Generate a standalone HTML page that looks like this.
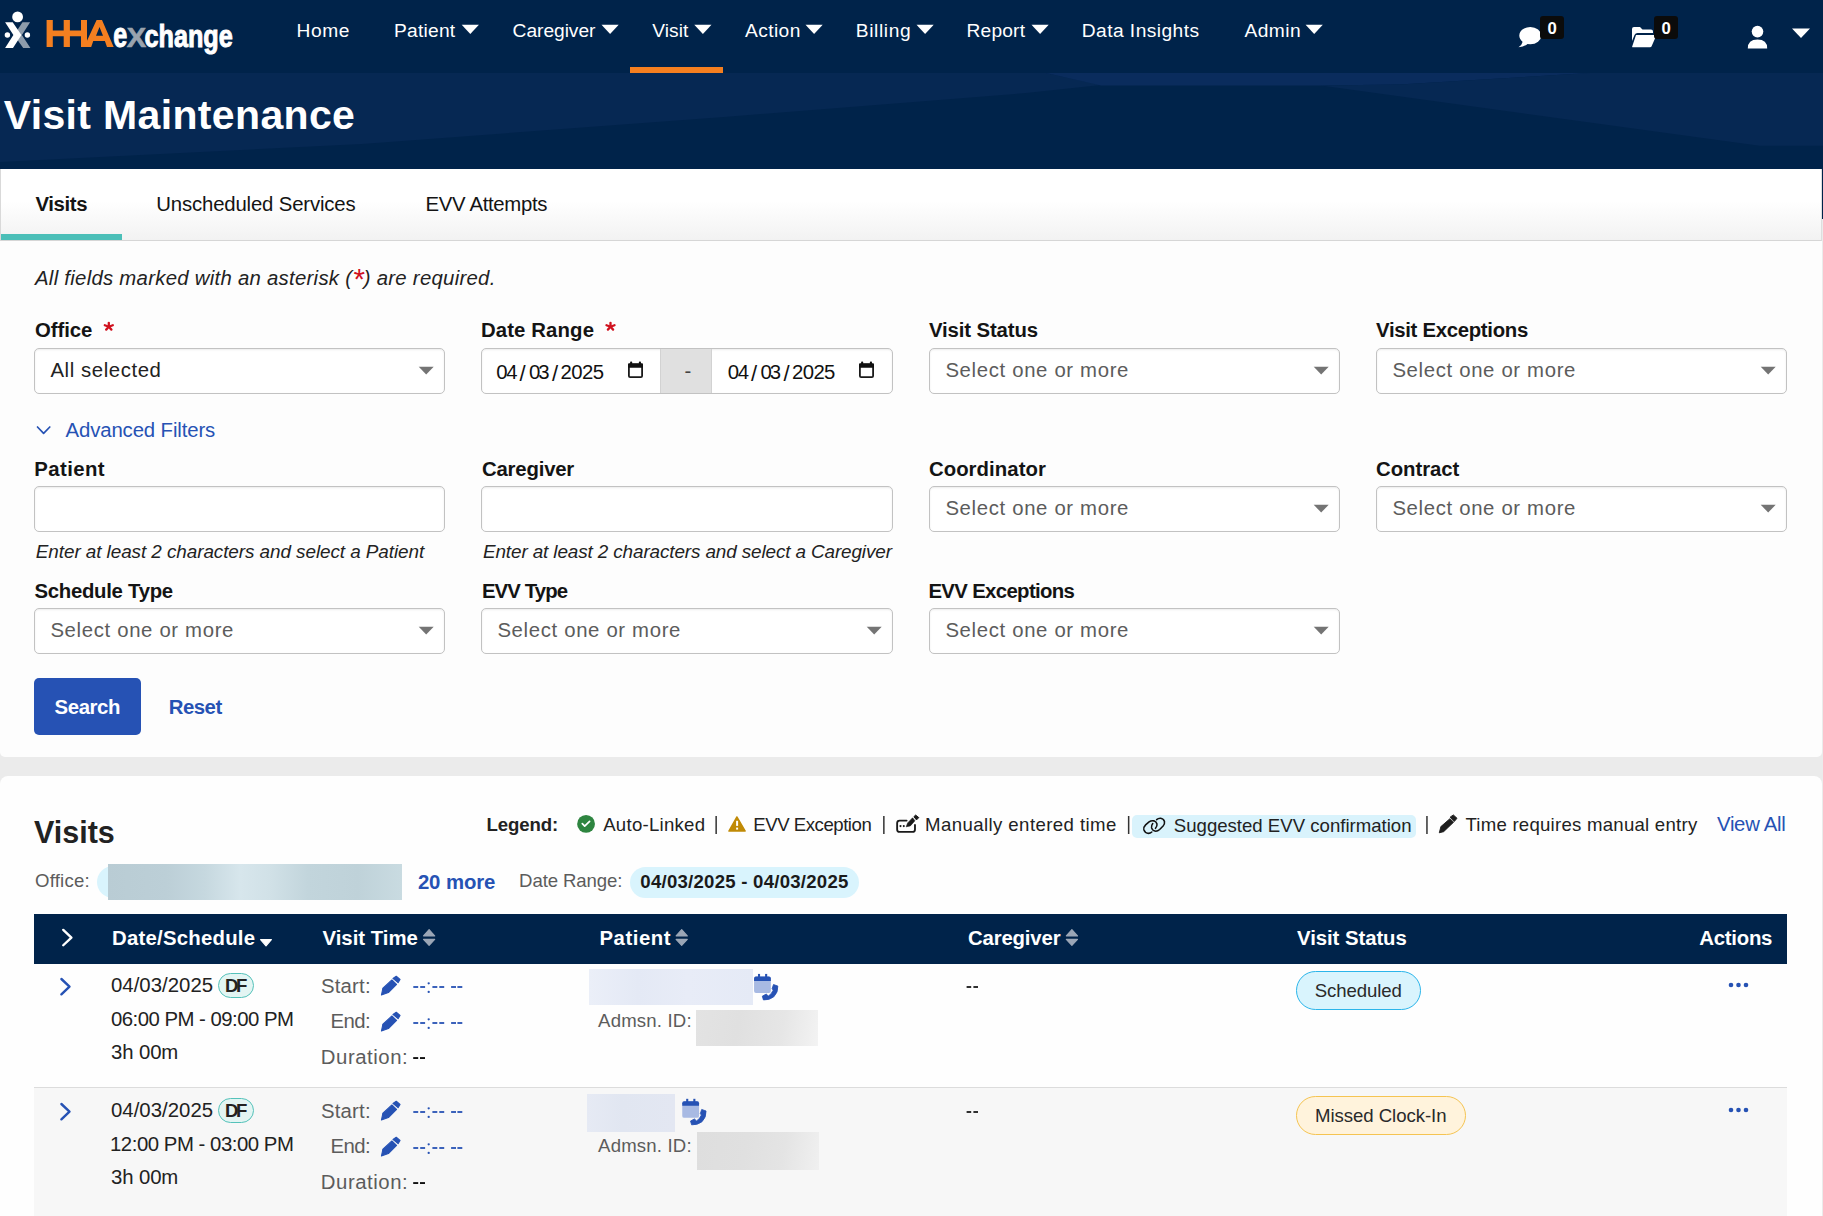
<!DOCTYPE html>
<html><head><meta charset="utf-8"><title>Visit Maintenance</title>
<style>
html,body{margin:0;padding:0;}
body{width:1823px;height:1216px;overflow:hidden;position:relative;background:#ebebeb;font-family:"Liberation Sans",sans-serif;}
.t{position:absolute;white-space:nowrap;line-height:normal;}
svg{position:absolute;overflow:visible;}
</style></head><body>
<div style="position:absolute;left:0px;top:0px;width:1823px;height:169px;background:#00234a"></div>
<div style="position:absolute;left:1822px;top:169px;width:1px;height:50px;background:#00234a"></div>
<div style="position:absolute;left:0px;top:219px;width:1823px;height:997px;background:#ebebeb"></div>
<div style="position:absolute;left:0px;top:230px;width:1822px;height:527px;background:#fdfdfd;border-radius:0 5px 5px 5px"></div>
<div style="position:absolute;left:0px;top:776px;width:1822px;height:440px;background:#fefefe;border-radius:8px 8px 0 0"></div>
<div style="position:absolute;left:0px;top:169px;width:1822px;height:72px;background:linear-gradient(#ffffff 0%,#ffffff 45%,#f2f2f2 100%);border-left:1px solid #d9d9d9;border-right:1px solid #dedede;box-sizing:border-box;border-bottom:1px solid #d6d6d6"></div>
<div style="position:absolute;left:1px;top:234px;width:121px;height:6px;background:#4bbfb8"></div>
<div style="position:absolute;left:34px;top:348px;width:411px;height:46px;background:#fff;border:1px solid #c2c2c2;border-radius:5px;box-sizing:border-box;box-shadow:inset 0 1px 2px rgba(0,0,0,.08)"></div>
<div style="position:absolute;left:929px;top:348px;width:411px;height:46px;background:#fff;border:1px solid #c2c2c2;border-radius:5px;box-sizing:border-box;box-shadow:inset 0 1px 2px rgba(0,0,0,.08)"></div>
<div style="position:absolute;left:1376px;top:348px;width:411px;height:46px;background:#fff;border:1px solid #c2c2c2;border-radius:5px;box-sizing:border-box;box-shadow:inset 0 1px 2px rgba(0,0,0,.08)"></div>
<div style="position:absolute;left:481px;top:348px;width:412px;height:46px;background:#fff;border:1px solid #c2c2c2;border-radius:5px;box-sizing:border-box;box-shadow:inset 0 1px 2px rgba(0,0,0,.08)"></div>
<div style="position:absolute;left:660px;top:349px;width:52px;height:44px;background:#e0e0e0;border-left:1px solid #d2d2d2;border-right:1px solid #d2d2d2;box-sizing:border-box"></div>
<div style="position:absolute;left:34px;top:486px;width:411px;height:46px;background:#fff;border:1px solid #c2c2c2;border-radius:5px;box-sizing:border-box;box-shadow:inset 0 1px 2px rgba(0,0,0,.08)"></div>
<div style="position:absolute;left:481px;top:486px;width:412px;height:46px;background:#fff;border:1px solid #c2c2c2;border-radius:5px;box-sizing:border-box;box-shadow:inset 0 1px 2px rgba(0,0,0,.08)"></div>
<div style="position:absolute;left:929px;top:486px;width:411px;height:46px;background:#fff;border:1px solid #c2c2c2;border-radius:5px;box-sizing:border-box;box-shadow:inset 0 1px 2px rgba(0,0,0,.08)"></div>
<div style="position:absolute;left:1376px;top:486px;width:411px;height:46px;background:#fff;border:1px solid #c2c2c2;border-radius:5px;box-sizing:border-box;box-shadow:inset 0 1px 2px rgba(0,0,0,.08)"></div>
<div style="position:absolute;left:34px;top:608px;width:411px;height:46px;background:#fff;border:1px solid #c2c2c2;border-radius:5px;box-sizing:border-box;box-shadow:inset 0 1px 2px rgba(0,0,0,.08)"></div>
<div style="position:absolute;left:481px;top:608px;width:412px;height:46px;background:#fff;border:1px solid #c2c2c2;border-radius:5px;box-sizing:border-box;box-shadow:inset 0 1px 2px rgba(0,0,0,.08)"></div>
<div style="position:absolute;left:929px;top:608px;width:411px;height:46px;background:#fff;border:1px solid #c2c2c2;border-radius:5px;box-sizing:border-box;box-shadow:inset 0 1px 2px rgba(0,0,0,.08)"></div>
<div style="position:absolute;left:34px;top:678px;width:107px;height:57px;background:#2652b4;border-radius:5px"></div>
<div style="position:absolute;left:1132px;top:814.5px;width:284px;height:23.200000000000045px;background:#d9f3fc;border-radius:5px"></div>
<div style="position:absolute;left:96.7px;top:866.2px;width:43.3px;height:31.5px;background:#d9f4fd;border-radius:16px 0 0 16px"></div>
<div style="position:absolute;left:108px;top:864px;width:294px;height:36px;background:linear-gradient(90deg,#b9ccd4 0%,#bccfd7 20%,#c6d8df 33%,#d7e6ec 45%,#d1e1e7 55%,#c2d5dc 68%,#bfd2d9 85%,#c9dbe1 100%)"></div>
<div style="position:absolute;left:630.3px;top:866.5px;width:228.70000000000005px;height:31.200000000000045px;background:#d9f4fd;border-radius:16px"></div>
<div style="position:absolute;left:34px;top:914px;width:1753px;height:50px;background:#00234a"></div>
<div style="position:absolute;left:34px;top:1087px;width:1753px;height:1px;background:#dcdcdc"></div>
<div style="position:absolute;left:34px;top:1088px;width:1753px;height:128px;background:#f7f7f7"></div>
<div style="position:absolute;left:218px;top:973.2px;width:35.80000000000001px;height:24.59999999999991px;background:#e3f5f3;border:1.3px solid #55c2ba;border-radius:13px;box-sizing:border-box"></div>
<div style="position:absolute;left:589px;top:969px;width:163.79999999999995px;height:35.60000000000002px;background:linear-gradient(90deg,#ebeff8,#e4e9f5 30%,#e8ecf7 60%,#e5eaf6)"></div>
<div style="position:absolute;left:695.9px;top:1010px;width:122.10000000000002px;height:35.700000000000045px;background:linear-gradient(100deg,#e3e3e3,#e0e0e0 35%,#e6e6e6 70%,#f3f3f3)"></div>
<div style="position:absolute;left:1296px;top:971px;width:125px;height:39px;background:#d9f4fd;border:1.5px solid #2bb5ea;border-radius:20px;box-sizing:border-box"></div>
<div style="position:absolute;left:218px;top:1098.2px;width:35.80000000000001px;height:24.59999999999991px;background:#e3f5f3;border:1.3px solid #55c2ba;border-radius:13px;box-sizing:border-box"></div>
<div style="position:absolute;left:587.1px;top:1094.2px;width:87.79999999999995px;height:37.700000000000045px;background:linear-gradient(90deg,#e6eaf4,#e1e6f1 40%,#e3e7f2)"></div>
<div style="position:absolute;left:697px;top:1132.2px;width:121.89999999999998px;height:37.700000000000045px;background:linear-gradient(100deg,#dedede,#e0e0e0 40%,#e4e4e4 70%,#f0f0f0)"></div>
<div style="position:absolute;left:1296px;top:1096px;width:170px;height:39px;background:#fff3dc;border:1.5px solid #f5c452;border-radius:20px;box-sizing:border-box"></div>
<svg style="left:0;top:0" width="1823" height="1216" viewBox="0 0 1823 1216">
<polygon fill="#062853" points="0,73 1046,73 1101,85 1026,93 724,117 362,144 0,162"/>
<polygon fill="#0a2c5d" points="1046,73 1590,73 1500,78.5 1400,84.4 1321,85.5 1101,85.5"/>
<polygon fill="#062853" points="1590,73 1823,73 1823,145.8 1759.6,145.8 1321,85.5 1400,84.4 1500,78.5"/>
<rect x="630" y="67" width="93" height="6" fill="#f47f20"/>
<circle cx="17.6" cy="16.9" r="5.4" fill="#fff"/>
<circle cx="7.4" cy="35" r="2.7" fill="#fff"/>
<circle cx="27.4" cy="35" r="2.7" fill="#fff"/>
<polygon fill="#8e9cab" points="30.1,22.3 22.5,22.3 14,35 23.2,48 30.4,48 21.9,35"/>
<polygon fill="#fff" points="5.1,22.3 12.7,22.3 21.4,35 13,48 5.1,48 13.4,35"/>
<path fill="#f47f20" fill-rule="evenodd" d="M46.6,20 H52.8 V30.6 H63.7 V20 H69.9 V30.6 H81 V20 H87 V40.8 L96.6,20 H102 L113.7,47.1 H107 L104.9,41 H93.25 L91.2,47.1 H81 V36.25 H69.9 V47.1 H63.7 V36.25 H52.8 V47.1 H46.6 Z M99.5,27.1 L103,35.8 H96 Z"/>
<g transform="translate(0,47.4) scale(1,1.22) translate(0,-47.4)" font-family="Liberation Sans" font-weight="700">
<text x="113.2" y="47.4" fill="#fff" stroke="#fff" stroke-width="0.8" font-size="28" textLength="14" lengthAdjust="spacingAndGlyphs">e</text>
<text x="126.8" y="47.4" fill="#9aa3ae" stroke="#9aa3ae" stroke-width="0.5" font-size="23" textLength="19.4" lengthAdjust="spacingAndGlyphs">X</text>
<text x="144.5" y="47.4" fill="#fff" stroke="#fff" stroke-width="0.8" font-size="26" textLength="88.3" lengthAdjust="spacingAndGlyphs">change</text></g>
<polygon points="461.7,24.8 478.9,24.8 470.3,34" fill="#fff"/>
<polygon points="601.5,24.8 618.7,24.8 610.1,34" fill="#fff"/>
<polygon points="694.3,24.8 711.5,24.8 702.9,34" fill="#fff"/>
<polygon points="805.5,24.8 822.7,24.8 814.1,34" fill="#fff"/>
<polygon points="916.5,24.8 933.7,24.8 925.1,34" fill="#fff"/>
<polygon points="1031.5,24.8 1048.7,24.8 1040.1,34" fill="#fff"/>
<polygon points="1305.6,24.8 1322.8,24.8 1314.1999999999998,34" fill="#fff"/>
<ellipse cx="1530.3" cy="35.6" rx="11" ry="8.6" fill="#fff"/>
<path d="M1523,41 Q1522,45 1518.5,47.2 Q1525,46.5 1528,43.5 Z" fill="#fff"/>
<rect x="1540" y="16" width="24" height="23" rx="3" fill="#0b0b0b"/>
<path d="M1632,29 Q1632,27 1634,27 L1640,27 L1642.5,29.5 L1651,29.5 Q1653,29.5 1653,31.5 L1653,33 L1637.5,33 Q1635.5,33 1634.5,35 L1632,41 Z" fill="#fff"/>
<path d="M1636,35 L1656.5,35 L1651.5,46.5 Q1651,47.2 1650,47.2 L1632.5,47.2 Q1631.8,47.2 1632.2,46.4 Z" fill="#fff"/>
<rect x="1654" y="16" width="24" height="23" rx="3" fill="#0b0b0b"/>
<circle cx="1757.5" cy="31.6" r="5.8" fill="#fff"/>
<path d="M1747.8,48.4 Q1747.8,39.5 1757.5,39.5 Q1767.2,39.5 1767.2,48.4 Z" fill="#fff"/>
<polygon points="1792,28.6 1810,28.6 1801,38.1" fill="#fff"/>
<g stroke="#d0121f" stroke-width="2.3" stroke-linecap="round"><line x1="108.8" y1="326.8" x2="108.8" y2="322.8"/><line x1="108.8" y1="326.8" x2="104.8" y2="325.2"/><line x1="108.8" y1="326.8" x2="112.8" y2="325.2"/><line x1="108.8" y1="326.8" x2="106.2" y2="329.6"/><line x1="108.8" y1="326.8" x2="111.39999999999999" y2="329.6"/></g>
<g stroke="#d0121f" stroke-width="2.3" stroke-linecap="round"><line x1="610.5" y1="326.8" x2="610.5" y2="322.8"/><line x1="610.5" y1="326.8" x2="606.5" y2="325.2"/><line x1="610.5" y1="326.8" x2="614.5" y2="325.2"/><line x1="610.5" y1="326.8" x2="607.9" y2="329.6"/><line x1="610.5" y1="326.8" x2="613.1" y2="329.6"/></g>
<polygon points="418.7,366.7 433.7,366.7 426.2,374.6" fill="#747474"/>
<polygon points="1313.7,366.7 1328.7,366.7 1321.2,374.6" fill="#747474"/>
<polygon points="1760.7,366.7 1775.7,366.7 1768.2,374.6" fill="#747474"/>
<rect x="628.9" y="364.7" width="13.2" height="12.5" rx="1.2" fill="none" stroke="#1a1a1a" stroke-width="1.8"/>
<rect x="628" y="363.3" width="15" height="4.4" rx="1" fill="#111"/>
<rect x="630.1" y="361.6" width="2.1" height="3" rx="0.8" fill="#111"/><rect x="638.9" y="361.6" width="2.1" height="3" rx="0.8" fill="#111"/>
<rect x="859.9" y="364.7" width="13.2" height="12.5" rx="1.2" fill="none" stroke="#1a1a1a" stroke-width="1.8"/>
<rect x="859" y="363.3" width="15" height="4.4" rx="1" fill="#111"/>
<rect x="861.1" y="361.6" width="2.1" height="3" rx="0.8" fill="#111"/><rect x="869.9" y="361.6" width="2.1" height="3" rx="0.8" fill="#111"/>
<polyline points="37.5,427 43.6,433.4 49.8,427" fill="none" stroke="#2652b4" stroke-width="1.7" stroke-linecap="round" stroke-linejoin="round"/>
<polygon points="1313.7,504.7 1328.7,504.7 1321.2,512.6" fill="#747474"/>
<polygon points="1760.7,504.7 1775.7,504.7 1768.2,512.6" fill="#747474"/>
<polygon points="418.7,626.7 433.7,626.7 426.2,634.6" fill="#747474"/>
<polygon points="866.7,626.7 881.7,626.7 874.2,634.6" fill="#747474"/>
<polygon points="1313.7,626.7 1328.7,626.7 1321.2,634.6" fill="#747474"/>
<circle cx="586.05" cy="823.9" r="8.9" fill="#2e8540"/>
<polyline points="582.3,823.7 584.7,826.1 589.6,821.4" fill="none" stroke="#fff" stroke-width="1.7" stroke-linecap="round" stroke-linejoin="round"/>
<polygon points="736.9,816.9 728.9,831.1 745.2,831.1" fill="#c08a06" stroke="#c08a06" stroke-width="1.4" stroke-linejoin="round"/>
<rect x="736.1" y="820.8" width="2" height="5.1" fill="#fff"/><rect x="736.1" y="827.6" width="2" height="2" fill="#fff"/>
<path d="M906.6,820.6 L899.6,820.6 Q897.14,820.6 897.14,823.1 L897.14,829.4 Q897.14,831.87 899.6,831.87 L912.5,831.87 Q914.98,831.87 914.98,829.4 L914.98,825" fill="none" stroke="#1a1a1a" stroke-width="1.85" stroke-linecap="round"/>
<circle cx="900.5" cy="826.1" r="1.05" fill="#1a1a1a"/><circle cx="903.8" cy="826.1" r="1.05" fill="#1a1a1a"/>
<polygon points="906.2,826.8 907.7,822.9 912.6,817.8 914.9,820.8 910.3,825.9" fill="#1a1a1a" stroke="#1a1a1a" stroke-width="0.6" stroke-linejoin="round"/>
<polygon points="913.9,816.7 915.6,815.1 918.8,817.6 916.5,819.9" fill="#1a1a1a" stroke="#1a1a1a" stroke-width="1" stroke-linejoin="round"/>
<g transform="translate(1138,812) scale(0.023026)" fill="none" stroke="#111" stroke-width="68" stroke-linecap="round">
<path d="M600,870 Q520,940 420,925 Q300,900 255,770 Q230,660 330,560 L480,430 Q580,360 690,385 Q800,420 825,520 Q840,620 760,710"/>
<path d="M640,500 Q570,590 590,690 Q630,820 770,835 Q860,830 940,760 L1090,610 Q1170,520 1150,410 Q1110,290 980,270 Q880,265 810,330"/></g>
<rect x="715.4" y="816" width="1.5" height="18" fill="#333"/>
<rect x="883.0999999999999" y="816" width="1.5" height="18" fill="#333"/>
<rect x="1127.8999999999999" y="816" width="1.5" height="18" fill="#333"/>
<rect x="1426.2" y="816" width="1.5" height="18" fill="#333"/>
<g transform="translate(1434,810) scale(0.023026)" fill="#1e1e1e" stroke="#1e1e1e" stroke-width="40" stroke-linejoin="round">
<polygon points="230,990 300,720 690,380 850,530 420,940"/>
<polygon points="700,310 840,215 1000,360 880,500"/></g>
<polyline points="63.25,929.9 71.4,937.6 63.25,945.25" fill="none" stroke="#fff" stroke-width="2.4" stroke-linecap="round" stroke-linejoin="round"/>
<polygon points="260.6,939.6 271.4,939.6 266,945.8" fill="#fff" stroke="#fff" stroke-width="1.2" stroke-linejoin="round"/>
<polygon points="429.1,929.6 423.5,935.9 434.7,935.9" fill="#9ba6b6" stroke="#9ba6b6" stroke-width="1.1" stroke-linejoin="round"/><polygon points="423.5,939.4 434.7,939.4 429.1,945.4" fill="#9ba6b6" stroke="#9ba6b6" stroke-width="1.1" stroke-linejoin="round"/>
<polygon points="681.7,929.6 676.1,935.9 687.3,935.9" fill="#9ba6b6" stroke="#9ba6b6" stroke-width="1.1" stroke-linejoin="round"/><polygon points="676.1,939.4 687.3,939.4 681.7,945.4" fill="#9ba6b6" stroke="#9ba6b6" stroke-width="1.1" stroke-linejoin="round"/>
<polygon points="1071.9,929.6 1066.3,935.9 1077.5,935.9" fill="#9ba6b6" stroke="#9ba6b6" stroke-width="1.1" stroke-linejoin="round"/><polygon points="1066.3,939.4 1077.5,939.4 1071.9,945.4" fill="#9ba6b6" stroke="#9ba6b6" stroke-width="1.1" stroke-linejoin="round"/>
<polyline points="61.4,979 69.5,986.6 61.4,994.3" fill="none" stroke="#2652b4" stroke-width="2.4" stroke-linecap="round" stroke-linejoin="round"/>
<g transform="translate(376,972) scale(0.023026)" fill="#2652b4" stroke="#2652b4" stroke-width="45" stroke-linejoin="round">
<polygon points="235,1000 300,705 690,345 895,540 540,895"/><polygon points="735,280 880,185 1045,325 960,465"/></g>
<rect x="413.3" y="986.1" width="4.9" height="1.8" fill="#2652b4"/><rect x="420.2" y="986.1" width="4.9" height="1.8" fill="#2652b4"/><rect x="432.4" y="986.1" width="4.9" height="1.8" fill="#2652b4"/><rect x="439.3" y="986.1" width="4.9" height="1.8" fill="#2652b4"/><rect x="451.1" y="986.1" width="4.9" height="1.8" fill="#2652b4"/><rect x="457.4" y="986.1" width="4.9" height="1.8" fill="#2652b4"/><circle cx="428.7" cy="983.3" r="1.15" fill="#2652b4"/><circle cx="428.7" cy="991.9" r="1.15" fill="#2652b4"/>
<g transform="translate(376,1008) scale(0.023026)" fill="#2652b4" stroke="#2652b4" stroke-width="45" stroke-linejoin="round">
<polygon points="235,1000 300,705 690,345 895,540 540,895"/><polygon points="735,280 880,185 1045,325 960,465"/></g>
<rect x="413.3" y="1022.1" width="4.9" height="1.8" fill="#2652b4"/><rect x="420.2" y="1022.1" width="4.9" height="1.8" fill="#2652b4"/><rect x="432.4" y="1022.1" width="4.9" height="1.8" fill="#2652b4"/><rect x="439.3" y="1022.1" width="4.9" height="1.8" fill="#2652b4"/><rect x="451.1" y="1022.1" width="4.9" height="1.8" fill="#2652b4"/><rect x="457.4" y="1022.1" width="4.9" height="1.8" fill="#2652b4"/><circle cx="428.7" cy="1019.3" r="1.15" fill="#2652b4"/><circle cx="428.7" cy="1027.9" r="1.15" fill="#2652b4"/>
<rect x="413.2" y="1057.1" width="5" height="1.9" fill="#111"/><rect x="420" y="1057.1" width="5" height="1.9" fill="#111"/>
<g transform="translate(750,970.0) scale(0.027972)">
<rect x="145" y="230" width="600" height="590" rx="70" fill="#a8bae3"/>
<path d="M145,390 L145,300 Q145,230 215,230 L675,230 Q745,230 745,300 L745,390 Z" fill="#2652b4"/>
<rect x="285" y="140" width="75" height="120" fill="#2652b4"/><rect x="540" y="140" width="75" height="120" fill="#2652b4"/>
<path d="M840,520 L995,575 Q1010,800 850,960 Q700,1080 480,1070 L440,935 L580,860 L655,930 Q760,880 830,720 L790,670 Z" fill="#2652b4" stroke="#2652b4" stroke-width="30" stroke-linejoin="round"/>
</g>
<rect x="966.6" y="986.1" width="4.6" height="1.8" fill="#1a1a1a"/><rect x="973.4" y="986.1" width="4.6" height="1.8" fill="#1a1a1a"/>
<circle cx="1731" cy="985" r="2.3" fill="#2652b4"/><circle cx="1738.5" cy="985" r="2.3" fill="#2652b4"/><circle cx="1746" cy="985" r="2.3" fill="#2652b4"/>
<polyline points="61.4,1104 69.5,1111.6 61.4,1119.3" fill="none" stroke="#2652b4" stroke-width="2.4" stroke-linecap="round" stroke-linejoin="round"/>
<g transform="translate(376,1097) scale(0.023026)" fill="#2652b4" stroke="#2652b4" stroke-width="45" stroke-linejoin="round">
<polygon points="235,1000 300,705 690,345 895,540 540,895"/><polygon points="735,280 880,185 1045,325 960,465"/></g>
<rect x="413.3" y="1111.1" width="4.9" height="1.8" fill="#2652b4"/><rect x="420.2" y="1111.1" width="4.9" height="1.8" fill="#2652b4"/><rect x="432.4" y="1111.1" width="4.9" height="1.8" fill="#2652b4"/><rect x="439.3" y="1111.1" width="4.9" height="1.8" fill="#2652b4"/><rect x="451.1" y="1111.1" width="4.9" height="1.8" fill="#2652b4"/><rect x="457.4" y="1111.1" width="4.9" height="1.8" fill="#2652b4"/><circle cx="428.7" cy="1108.3" r="1.15" fill="#2652b4"/><circle cx="428.7" cy="1116.9" r="1.15" fill="#2652b4"/>
<g transform="translate(376,1133) scale(0.023026)" fill="#2652b4" stroke="#2652b4" stroke-width="45" stroke-linejoin="round">
<polygon points="235,1000 300,705 690,345 895,540 540,895"/><polygon points="735,280 880,185 1045,325 960,465"/></g>
<rect x="413.3" y="1147.1" width="4.9" height="1.8" fill="#2652b4"/><rect x="420.2" y="1147.1" width="4.9" height="1.8" fill="#2652b4"/><rect x="432.4" y="1147.1" width="4.9" height="1.8" fill="#2652b4"/><rect x="439.3" y="1147.1" width="4.9" height="1.8" fill="#2652b4"/><rect x="451.1" y="1147.1" width="4.9" height="1.8" fill="#2652b4"/><rect x="457.4" y="1147.1" width="4.9" height="1.8" fill="#2652b4"/><circle cx="428.7" cy="1144.3" r="1.15" fill="#2652b4"/><circle cx="428.7" cy="1152.9" r="1.15" fill="#2652b4"/>
<rect x="413.2" y="1182.1" width="5" height="1.9" fill="#111"/><rect x="420" y="1182.1" width="5" height="1.9" fill="#111"/>
<g transform="translate(678.2,1094.8999999999999) scale(0.027972)">
<rect x="145" y="230" width="600" height="590" rx="70" fill="#a8bae3"/>
<path d="M145,390 L145,300 Q145,230 215,230 L675,230 Q745,230 745,300 L745,390 Z" fill="#2652b4"/>
<rect x="285" y="140" width="75" height="120" fill="#2652b4"/><rect x="540" y="140" width="75" height="120" fill="#2652b4"/>
<path d="M840,520 L995,575 Q1010,800 850,960 Q700,1080 480,1070 L440,935 L580,860 L655,930 Q760,880 830,720 L790,670 Z" fill="#2652b4" stroke="#2652b4" stroke-width="30" stroke-linejoin="round"/>
</g>
<rect x="966.6" y="1111.1" width="4.6" height="1.8" fill="#1a1a1a"/><rect x="973.4" y="1111.1" width="4.6" height="1.8" fill="#1a1a1a"/>
<circle cx="1731" cy="1110" r="2.3" fill="#2652b4"/><circle cx="1738.5" cy="1110" r="2.3" fill="#2652b4"/><circle cx="1746" cy="1110" r="2.3" fill="#2652b4"/>
</svg>
<div class="t" style="left:296.60px;top:19.58px;font-size:19.19px;color:#fff;letter-spacing:0.541px;">Home</div>
<div class="t" style="left:394.00px;top:19.58px;font-size:19.19px;color:#fff;letter-spacing:0.240px;">Patient</div>
<div class="t" style="left:512.60px;top:19.58px;font-size:19.19px;color:#fff;letter-spacing:-0.041px;">Caregiver</div>
<div class="t" style="left:652.20px;top:19.58px;font-size:19.19px;color:#fff;letter-spacing:0.064px;">Visit</div>
<div class="t" style="left:745.00px;top:19.58px;font-size:19.19px;color:#fff;letter-spacing:0.396px;">Action</div>
<div class="t" style="left:855.80px;top:19.58px;font-size:19.19px;color:#fff;letter-spacing:0.619px;">Billing</div>
<div class="t" style="left:966.50px;top:19.58px;font-size:19.19px;color:#fff;letter-spacing:0.177px;">Report</div>
<div class="t" style="left:1081.80px;top:19.58px;font-size:19.19px;color:#fff;letter-spacing:0.441px;">Data Insights</div>
<div class="t" style="left:1244.40px;top:19.58px;font-size:19.19px;color:#fff;letter-spacing:0.480px;">Admin</div>
<div class="t" style="left:1547.50px;top:18.86px;font-size:16.72px;color:#fff;font-weight:700;">0</div>
<div class="t" style="left:1661.50px;top:18.86px;font-size:16.72px;color:#fff;font-weight:700;">0</div>
<div class="t" style="left:3.70px;top:92.02px;font-size:40.99px;color:#fff;font-weight:700;letter-spacing:0.361px;">Visit Maintenance</div>
<div class="t" style="left:35.40px;top:192.52px;font-size:20.35px;color:#141414;font-weight:700;letter-spacing:-0.352px;">Visits</div>
<div class="t" style="left:156.30px;top:192.52px;font-size:20.35px;color:#141414;letter-spacing:-0.163px;">Unscheduled Services</div>
<div class="t" style="left:425.50px;top:192.52px;font-size:20.35px;color:#141414;letter-spacing:-0.325px;">EVV Attempts</div>
<div class="t" style="left:35.00px;top:266.52px;font-size:20.35px;color:#222;font-style:italic;letter-spacing:0.270px;">All fields marked with an asterisk (<span style="color:#d0121f;font-size:1.45em;line-height:0;vertical-align:-0.14em;letter-spacing:0">*</span>) are required.</div>
<div class="t" style="left:35.00px;top:318.52px;font-size:20.35px;color:#141414;font-weight:700;letter-spacing:-0.081px;">Office</div>
<div class="t" style="left:480.90px;top:318.52px;font-size:20.35px;color:#141414;font-weight:700;letter-spacing:0.130px;">Date Range</div>
<div class="t" style="left:928.90px;top:318.52px;font-size:20.35px;color:#141414;font-weight:700;letter-spacing:-0.112px;">Visit Status</div>
<div class="t" style="left:1376.00px;top:318.52px;font-size:20.35px;color:#141414;font-weight:700;letter-spacing:-0.304px;">Visit Exceptions</div>
<div class="t" style="left:50.40px;top:358.52px;font-size:20.35px;color:#222;letter-spacing:0.587px;">All selected</div>
<div class="t" style="left:945.40px;top:358.52px;font-size:20.35px;color:#5c5c5c;letter-spacing:0.656px;">Select one or more</div>
<div class="t" style="left:1392.40px;top:358.52px;font-size:20.35px;color:#5c5c5c;letter-spacing:0.656px;">Select one or more</div>
<div class="t" style="left:684.60px;top:359.52px;font-size:20.35px;color:#444;">-</div>
<div class="t" style="left:496.30px;top:360.52px;font-size:20.35px;color:#111;letter-spacing:-1.306px;">04</div>
<div class="t" style="left:519.60px;top:361.04px;font-size:22.00px;color:#111;">/</div>
<div class="t" style="left:529.00px;top:360.52px;font-size:20.35px;color:#111;letter-spacing:-2.006px;">03</div>
<div class="t" style="left:552.00px;top:361.04px;font-size:22.00px;color:#111;">/</div>
<div class="t" style="left:560.60px;top:360.52px;font-size:20.35px;color:#111;letter-spacing:-0.606px;">2025</div>
<div class="t" style="left:727.70px;top:360.52px;font-size:20.35px;color:#111;letter-spacing:-1.306px;">04</div>
<div class="t" style="left:751.00px;top:361.04px;font-size:22.00px;color:#111;">/</div>
<div class="t" style="left:760.40px;top:360.52px;font-size:20.35px;color:#111;letter-spacing:-2.006px;">03</div>
<div class="t" style="left:783.40px;top:361.04px;font-size:22.00px;color:#111;">/</div>
<div class="t" style="left:792.00px;top:360.52px;font-size:20.35px;color:#111;letter-spacing:-0.606px;">2025</div>
<div class="t" style="left:65.50px;top:418.52px;font-size:20.35px;color:#2652b4;letter-spacing:-0.116px;">Advanced Filters</div>
<div class="t" style="left:34.30px;top:457.52px;font-size:20.35px;color:#141414;font-weight:700;letter-spacing:0.416px;">Patient</div>
<div class="t" style="left:482.00px;top:457.52px;font-size:20.35px;color:#141414;font-weight:700;letter-spacing:-0.197px;">Caregiver</div>
<div class="t" style="left:928.90px;top:457.52px;font-size:20.35px;color:#141414;font-weight:700;letter-spacing:0.060px;">Coordinator</div>
<div class="t" style="left:1376.00px;top:457.52px;font-size:20.35px;color:#141414;font-weight:700;letter-spacing:-0.044px;">Contract</div>
<div class="t" style="left:945.40px;top:496.52px;font-size:20.35px;color:#5c5c5c;letter-spacing:0.656px;">Select one or more</div>
<div class="t" style="left:1392.40px;top:496.52px;font-size:20.35px;color:#5c5c5c;letter-spacing:0.656px;">Select one or more</div>
<div class="t" style="left:35.80px;top:540.85px;font-size:18.90px;color:#222;font-style:italic;letter-spacing:-0.070px;">Enter at least 2 characters and select a Patient</div>
<div class="t" style="left:483.00px;top:540.85px;font-size:18.90px;color:#222;font-style:italic;letter-spacing:-0.119px;">Enter at least 2 characters and select a Caregiver</div>
<div class="t" style="left:34.50px;top:579.52px;font-size:20.35px;color:#141414;font-weight:700;letter-spacing:-0.288px;">Schedule Type</div>
<div class="t" style="left:481.90px;top:579.52px;font-size:20.35px;color:#141414;font-weight:700;letter-spacing:-0.865px;">EVV Type</div>
<div class="t" style="left:928.40px;top:579.52px;font-size:20.35px;color:#141414;font-weight:700;letter-spacing:-0.644px;">EVV Exceptions</div>
<div class="t" style="left:50.40px;top:618.52px;font-size:20.35px;color:#5c5c5c;letter-spacing:0.656px;">Select one or more</div>
<div class="t" style="left:497.40px;top:618.52px;font-size:20.35px;color:#5c5c5c;letter-spacing:0.656px;">Select one or more</div>
<div class="t" style="left:945.40px;top:618.52px;font-size:20.35px;color:#5c5c5c;letter-spacing:0.656px;">Select one or more</div>
<div class="t" style="left:54.60px;top:695.52px;font-size:20.35px;color:#fff;font-weight:700;letter-spacing:-0.397px;">Search</div>
<div class="t" style="left:168.70px;top:695.52px;font-size:20.35px;color:#2652b4;font-weight:700;letter-spacing:-0.474px;">Reset</div>
<div class="t" style="left:34.00px;top:815.40px;font-size:30.52px;color:#222;font-weight:700;letter-spacing:-0.018px;">Visits</div>
<div class="t" style="left:486.60px;top:814.12px;font-size:18.60px;color:#222;font-weight:700;letter-spacing:-0.119px;">Legend:</div>
<div class="t" style="left:603.20px;top:814.12px;font-size:18.60px;color:#222;letter-spacing:0.261px;">Auto-Linked</div>
<div class="t" style="left:753.30px;top:814.12px;font-size:18.60px;color:#222;letter-spacing:-0.466px;">EVV Exception</div>
<div class="t" style="left:925.00px;top:814.12px;font-size:18.60px;color:#222;letter-spacing:0.420px;">Manually entered time</div>
<div class="t" style="left:1173.80px;top:815.12px;font-size:18.60px;color:#222;">Suggested EVV confirmation</div>
<div class="t" style="left:1465.40px;top:814.12px;font-size:18.60px;color:#222;letter-spacing:0.247px;">Time requires manual entry</div>
<div class="t" style="left:1717.00px;top:812.52px;font-size:20.35px;color:#2652b4;letter-spacing:-0.302px;">View All</div>
<div class="t" style="left:35.00px;top:870.12px;font-size:18.60px;color:#5c5c5c;letter-spacing:0.212px;">Office:</div>
<div class="t" style="left:417.90px;top:870.52px;font-size:20.35px;color:#2652b4;font-weight:700;letter-spacing:-0.094px;">20 more</div>
<div class="t" style="left:519.10px;top:870.12px;font-size:18.60px;color:#5c5c5c;letter-spacing:-0.103px;">Date Range:</div>
<div class="t" style="left:640.30px;top:871.12px;font-size:18.60px;color:#1a1a1a;font-weight:700;letter-spacing:0.245px;">04/03/2025 - 04/03/2025</div>
<div class="t" style="left:112.00px;top:926.52px;font-size:20.35px;color:#fff;font-weight:700;letter-spacing:0.235px;">Date/Schedule</div>
<div class="t" style="left:322.50px;top:926.52px;font-size:20.35px;color:#fff;font-weight:700;">Visit Time</div>
<div class="t" style="left:599.50px;top:926.52px;font-size:20.35px;color:#fff;font-weight:700;letter-spacing:0.533px;">Patient</div>
<div class="t" style="left:968.00px;top:926.52px;font-size:20.35px;color:#fff;font-weight:700;letter-spacing:-0.160px;">Caregiver</div>
<div class="t" style="left:1297.00px;top:926.52px;font-size:20.35px;color:#fff;font-weight:700;letter-spacing:-0.057px;">Visit Status</div>
<div class="t" style="left:1699.30px;top:926.52px;font-size:20.35px;color:#fff;font-weight:700;letter-spacing:-0.256px;">Actions</div>
<div class="t" style="left:111.00px;top:973.52px;font-size:20.35px;color:#222;letter-spacing:0.030px;">04/03/2025</div>
<div class="t" style="left:225.10px;top:975.12px;font-size:18.60px;color:#222;font-weight:700;letter-spacing:-2.428px;">DF</div>
<div class="t" style="left:111.00px;top:1007.52px;font-size:20.35px;color:#222;letter-spacing:-0.520px;">06:00 PM - 09:00 PM</div>
<div class="t" style="left:111.00px;top:1040.52px;font-size:20.35px;color:#222;letter-spacing:-0.114px;">3h 00m</div>
<div class="t" style="left:321.00px;top:974.52px;font-size:20.35px;color:#5c5c5c;letter-spacing:0.194px;">Start:</div>
<div class="t" style="left:330.40px;top:1009.52px;font-size:20.35px;color:#5c5c5c;letter-spacing:-0.557px;">End:</div>
<div class="t" style="left:320.80px;top:1045.52px;font-size:20.35px;color:#5c5c5c;letter-spacing:0.546px;">Duration:</div>
<div class="t" style="left:598.10px;top:1010.12px;font-size:18.60px;color:#5c5c5c;letter-spacing:0.167px;">Admsn. ID:</div>
<div class="t" style="left:1314.70px;top:980.12px;font-size:18.60px;color:#2a2a2a;letter-spacing:-0.079px;">Scheduled</div>
<div class="t" style="left:111.00px;top:1098.52px;font-size:20.35px;color:#222;letter-spacing:0.030px;">04/03/2025</div>
<div class="t" style="left:225.10px;top:1100.12px;font-size:18.60px;color:#222;font-weight:700;letter-spacing:-2.428px;">DF</div>
<div class="t" style="left:110.00px;top:1132.52px;font-size:20.35px;color:#222;letter-spacing:-0.464px;">12:00 PM - 03:00 PM</div>
<div class="t" style="left:111.00px;top:1165.52px;font-size:20.35px;color:#222;letter-spacing:-0.114px;">3h 00m</div>
<div class="t" style="left:321.00px;top:1099.52px;font-size:20.35px;color:#5c5c5c;letter-spacing:0.194px;">Start:</div>
<div class="t" style="left:330.40px;top:1134.52px;font-size:20.35px;color:#5c5c5c;letter-spacing:-0.557px;">End:</div>
<div class="t" style="left:320.80px;top:1170.52px;font-size:20.35px;color:#5c5c5c;letter-spacing:0.546px;">Duration:</div>
<div class="t" style="left:598.10px;top:1135.12px;font-size:18.60px;color:#5c5c5c;letter-spacing:0.167px;">Admsn. ID:</div>
<div class="t" style="left:1315.00px;top:1105.12px;font-size:18.60px;color:#2a2a2a;letter-spacing:-0.051px;">Missed Clock-In</div>

</body></html>
